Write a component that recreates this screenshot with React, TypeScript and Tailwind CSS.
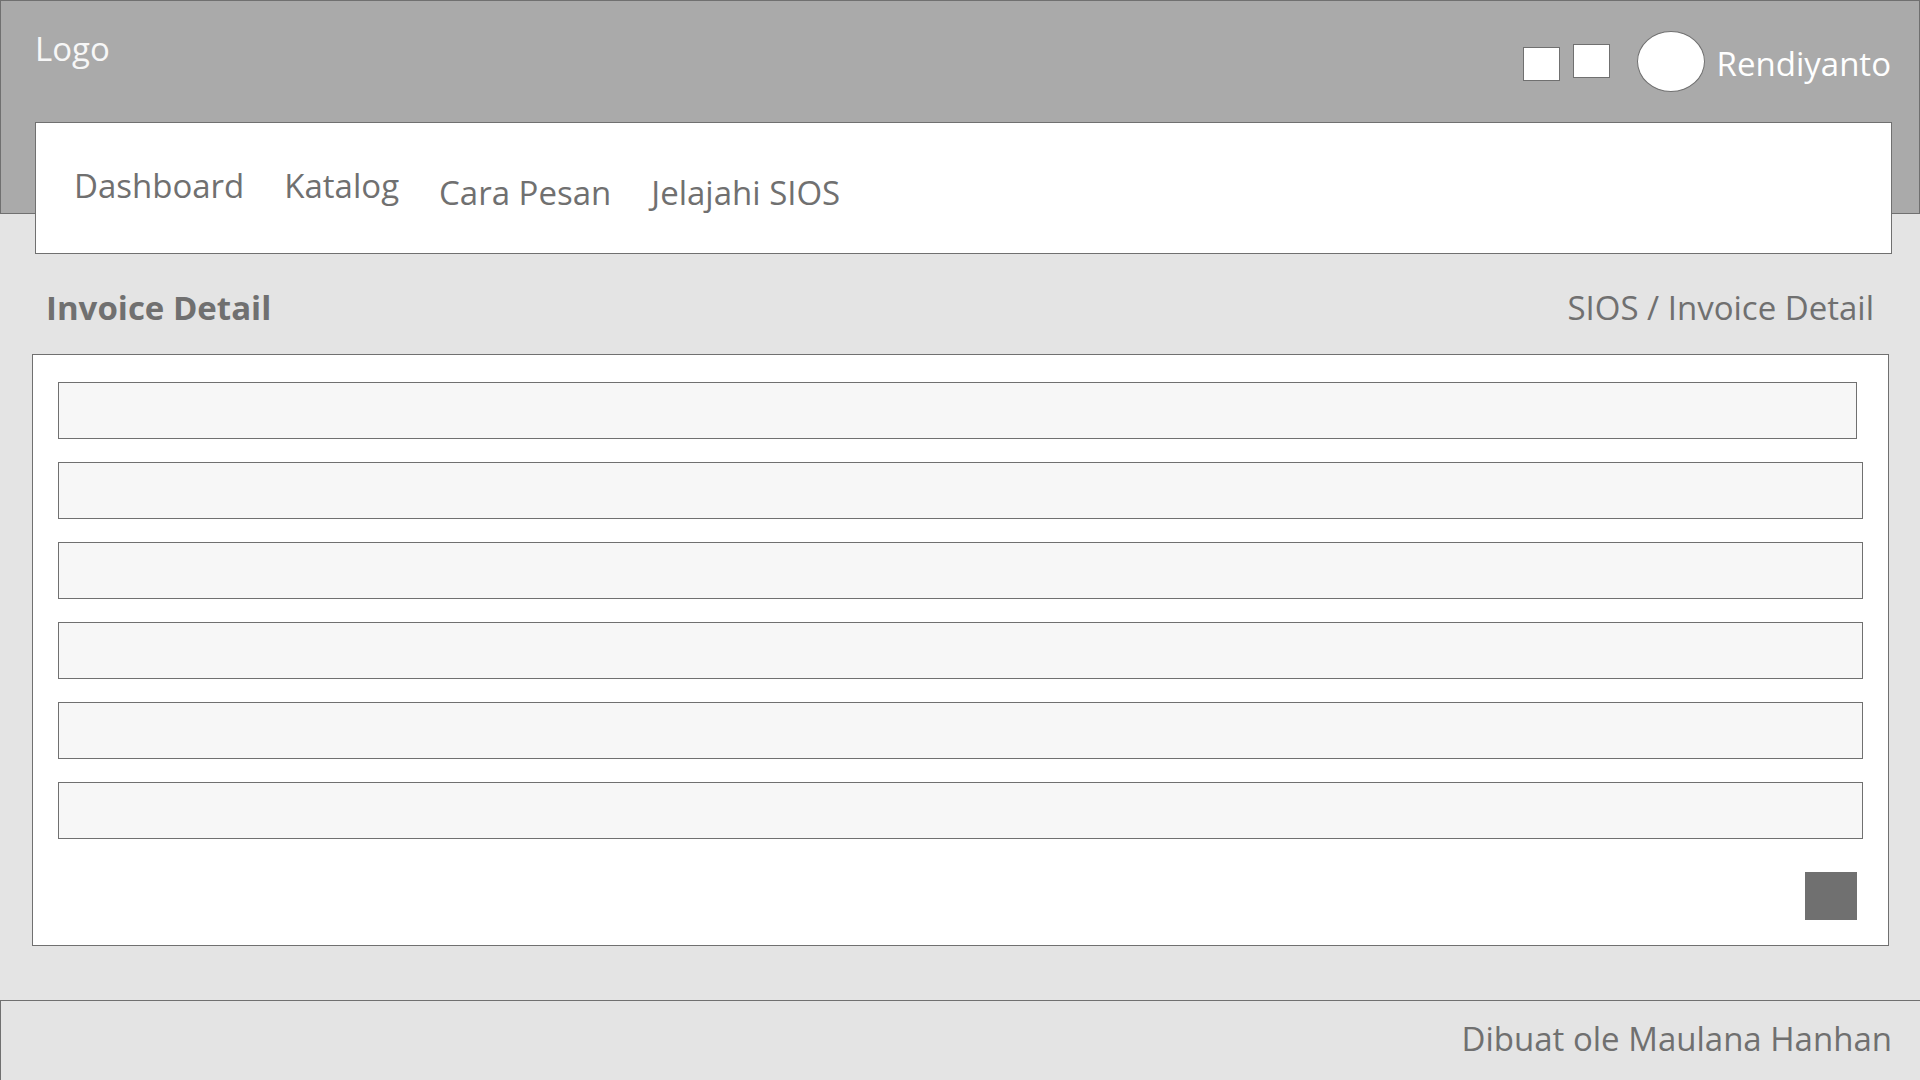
const rows = [
  { id: 1, inset: "mr-1.5" },
  { id: 2, inset: "" },
  { id: 3, inset: "" },
  { id: 4, inset: "" },
  { id: 5, inset: "" },
  { id: 6, inset: "" },
];

function Header() {
  return (
    <header className="flex h-[214px] items-start justify-between border border-[#707070] bg-[#aaaaaa] pl-[34px] pr-7">
      <a href="#" className="mt-6 text-[#f7f7f7]">
        Logo
      </a>
      <div className="flex items-start text-white">
        <button type="button" aria-label="Notifications" className="mt-[46px] h-[34px] w-[37px] border border-[#707070] bg-white" />
        <button type="button" aria-label="Messages" className="ml-[13px] mt-[43px] h-[34px] w-[37px] border border-[#707070] bg-white" />
        <div className="ml-[27px] mt-[30px] h-[61px] w-[68px] rounded-[50%] border border-[#707070] bg-white" />
        <span className="ml-3 mt-[39px]">Rendiyanto</span>
      </div>
    </header>
  );
}

function Navigation() {
  return (
    <nav className="relative -mt-[92px] ml-[35px] mr-7 flex h-[132px] items-start gap-10 border border-[#707070] bg-white pl-[38px] pt-[39px]">
      <div className="flex gap-10">
        <a href="#">Dashboard</a>
        <a href="#">Katalog</a>
      </div>
      <div className="mt-[7px] flex gap-10">
        <a href="#">Cara Pesan</a>
        <a href="#">Jelajahi SIOS</a>
      </div>
    </nav>
  );
}

export default function App() {
  return (
    <div className="flex min-h-screen flex-col bg-[#e4e4e4] font-['Open_Sans','Noto_Sans',sans-serif] text-[33px] leading-[48px] text-[#707070]">
      <Header />
      <Navigation />
      <main className="flex flex-col">
        <div className="mt-[30px] flex justify-between px-[46px]">
          <h1 className="font-bold">Invoice Detail</h1>
          <p>SIOS / Invoice Detail</p>
        </div>
        <section className="ml-8 mr-[31px] mt-[22px] border border-[#707070] bg-white px-[25px] pb-[25px] pt-[27px]">
          <div className="flex flex-col gap-[23px]">
            {rows.map((row) => (
              <div key={row.id} className={`h-[57px] border border-[#707070] bg-[#f7f7f7] ${row.inset}`} />
            ))}
          </div>
          <div className="mr-1.5 mt-[33px] flex justify-end">
            <button type="button" aria-label="Submit" className="h-12 w-[52px] bg-[#707070]" />
          </div>
        </section>
      </main>
      <footer className="mt-auto flex justify-end border-l border-t border-[#707070] pb-[17px] pr-7 pt-[14px]">
        <p>Dibuat ole Maulana Hanhan</p>
      </footer>
    </div>
  );
}
